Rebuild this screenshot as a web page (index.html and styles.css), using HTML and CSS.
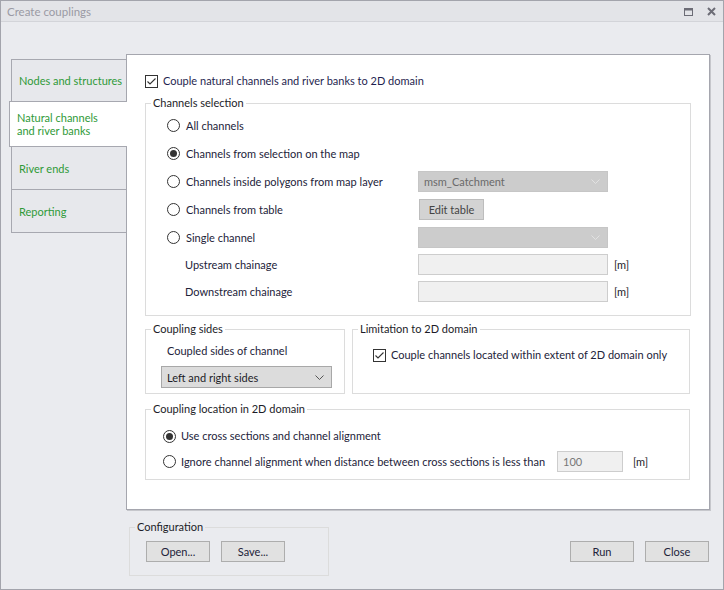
FILE: index.html
```html
<!DOCTYPE html>
<html lang="en">
<head>
  <meta charset="UTF-8">
  <title>Create couplings</title>
  <link rel="stylesheet" href="styles.css">
</head>
<body>
  <div class="window">
    <div class="titlebar">
      <span class="title">Create couplings</span>
      <span class="win-buttons">
        <svg width="9" height="8" viewBox="0 0 9 8"><rect x="0.5" y="0.5" width="8" height="7" fill="none" stroke="#6c6c76" stroke-width="1"/><rect x="0" y="0" width="9" height="2.5" fill="#6c6c76"/></svg>
        <svg width="9" height="9" viewBox="0 0 9 9"><path d="M1 1 L8 8 M8 1 L1 8" stroke="#6c6c76" stroke-width="2"/></svg>
      </span>
    </div>

    <div class="main">
      <div class="tabs">
        <div class="tab">Nodes and structures</div>
        <div class="tab active">Natural channels<br>and river banks</div>
        <div class="tab">River ends</div>
        <div class="tab">Reporting</div>
      </div>

      <div class="panel">
        <label class="check-row top-check">
          <span class="checkbox checked"></span>
          <span>Couple natural channels and river banks to 2D domain</span>
        </label>

        <fieldset class="group channels">
          <legend>Channels selection</legend>
          <div class="sel-grid">
            <div class="opt"><span class="radio"></span>All channels</div>
            <div></div>

            <div class="opt"><span class="radio on"></span>Channels from selection on the map</div>
            <div></div>

            <div class="opt"><span class="radio"></span>Channels inside polygons from map layer</div>
            <div class="combo disabled">msm_Catchment<span class="chev"></span></div>

            <div class="opt"><span class="radio"></span>Channels from table</div>
            <div><span class="btn small disabled">Edit table</span></div>

            <div class="opt"><span class="radio"></span>Single channel</div>
            <div class="combo disabled"><span class="chev"></span></div>

            <div class="sub">Upstream chainage</div>
            <div class="field-wrap"><span class="field"></span><span class="unit">[m]</span></div>

            <div class="sub">Downstream chainage</div>
            <div class="field-wrap"><span class="field"></span><span class="unit">[m]</span></div>
          </div>
        </fieldset>

        <div class="group-row">
          <fieldset class="group sides">
            <legend>Coupling sides</legend>
            <div class="sides-body">
              <div class="sides-label">Coupled sides of channel</div>
              <div class="combo active-combo">Left and right sides<span class="chev dark"></span></div>
            </div>
          </fieldset>
          <fieldset class="group limit">
            <legend>Limitation to 2D domain</legend>
            <label class="check-row limit-body">
              <span class="checkbox checked"></span>
              <span>Couple channels located within extent of 2D domain only</span>
            </label>
          </fieldset>
        </div>

        <fieldset class="group location">
          <legend>Coupling location in 2D domain</legend>
          <div class="loc-body">
            <div class="loc-row first"><span class="radio on"></span>Use cross sections and channel alignment</div>
            <div class="loc-row second">
              <span class="loc-label"><span class="radio"></span>Ignore channel alignment when distance between cross sections is less than</span>
              <span class="field short">100</span>
              <span class="unit wide">[m]</span>
            </div>
          </div>
        </fieldset>
      </div>
    </div>

    <div class="footer">
      <fieldset class="group config">
        <legend>Configuration</legend>
        <div class="btn-row config-body">
          <span class="btn">Open...</span>
          <span class="btn">Save...</span>
        </div>
      </fieldset>
      <div class="btn-row actions">
        <span class="btn">Run</span>
        <span class="btn">Close</span>
      </div>
    </div>
  </div>
</body>
</html>
```

FILE: styles.css
```css
body {
  margin: 0;
  font-family: "Lato", "Open Sans", sans-serif;
  font-size: 11px;
  color: #23233a;
}

.window {
  width: 724px;
  height: 590px;
  box-sizing: border-box;
  border: 1px solid #a3a4ac;
  background-color: #eaebef;
}

.titlebar {
  height: 20px;
  border-bottom: 1px solid #d3d4d9;
  background-color: #e3e4e8;
  display: flex;
  align-items: center;
  padding: 0 7px 0 6px;
}

.title {
  color: #9a9aa4;
  flex: 1;
  font-size: 11.5px;
}

.win-buttons {
  display: flex;
  align-items: center;
  gap: 14px;
  padding-top: 1px;
}

.main {
  display: flex;
  padding: 32px 0 0 10px;
}

.tabs {
  width: 115px;
  padding-top: 5px;
  display: flex;
  flex-direction: column;
}

.tab {
  box-sizing: border-box;
  height: 44px;
  margin-top: -1px;
  border: 1px solid #a7a8b0;
  border-right: none;
  background-color: #e7e8ec;
  color: #2f9a38;
  display: flex;
  align-items: center;
  padding-left: 7px;
  line-height: 13px;
  white-space: nowrap;
}

.tab:first-child {
  margin-top: 0;
  height: 43px;
}

.tab.active {
  position: relative;
  z-index: 1;
  height: 46px;
  margin-left: -2px;
  margin-right: -1px;
  background-color: #fff;
}

.panel {
  box-sizing: border-box;
  width: 584px;
  height: 456px;
  background-color: #fff;
  border: 1px solid #a5a6ae;
  box-shadow: 1px 1px 0 #c6c7cc;
  padding: 18px 18px 0 18px;
}

.check-row {
  display: flex;
  align-items: center;
  gap: 5px;
  line-height: 16px;
}

.top-check {
  color: #1f1f50;
}

.checkbox {
  box-sizing: border-box;
  width: 13px;
  height: 13px;
  border: 1px solid #333;
  background-color: #fff;
  flex: none;
}

.checkbox.checked {
  background: #fff url("data:image/svg+xml,%3Csvg xmlns='http://www.w3.org/2000/svg' width='11' height='11'%3E%3Cpath d='M1.5 5.5 L4 8 L9.5 2.5' fill='none' stroke='%23333' stroke-width='1.1'/%3E%3C/svg%3E") no-repeat center;
}

.radio {
  box-sizing: border-box;
  width: 13px;
  height: 13px;
  border: 1px solid #333;
  border-radius: 50%;
  background-color: #fff;
  flex: none;
  display: inline-flex;
  align-items: center;
  justify-content: center;
}

.radio.on::after {
  content: "";
  width: 7px;
  height: 7px;
  border-radius: 50%;
  background-color: #333;
}

.group {
  margin: 0;
  padding: 0;
  border: 1px solid #dcdcdc;
  min-width: 0;
  box-sizing: border-box;
}

.group legend {
  margin-left: 5px;
  padding: 0 2px;
  line-height: 16px;
  color: #1c1c28;
}

.channels {
  margin-top: 6px;
  width: 546px;
  padding-bottom: 10px;
}

.sel-grid {
  display: grid;
  grid-template-columns: 251px auto;
  grid-template-rows: repeat(5, 28px) repeat(2, 27px);
  align-items: center;
  padding-left: 21px;
}

.opt {
  display: flex;
  align-items: center;
  gap: 6px;
}

.sub {
  padding-left: 18px;
}

.combo {
  box-sizing: border-box;
  width: 190px;
  height: 21px;
  display: flex;
  align-items: center;
  padding-left: 5px;
  border: 1px solid #c6c6c6;
}

.combo.disabled {
  background-color: #cccccc;
  color: #6a6a6a;
}

.chev {
  margin-left: auto;
  margin-right: 7px;
  width: 9px;
  height: 5px;
  background: url("data:image/svg+xml,%3Csvg xmlns='http://www.w3.org/2000/svg' width='9' height='5'%3E%3Cpath d='M0.5 0.5 L4.5 4.5 L8.5 0.5' fill='none' stroke='%23e2e2e2' stroke-width='1'/%3E%3C/svg%3E") no-repeat;
}

.chev.dark {
  background: url("data:image/svg+xml,%3Csvg xmlns='http://www.w3.org/2000/svg' width='9' height='5'%3E%3Cpath d='M0.5 0.5 L4.5 4.5 L8.5 0.5' fill='none' stroke='%23555' stroke-width='1'/%3E%3C/svg%3E") no-repeat;
}

.btn {
  box-sizing: border-box;
  width: 64px;
  height: 21px;
  display: inline-flex;
  align-items: center;
  justify-content: center;
  background-color: #e1e1e1;
  border: 1px solid #adadad;
  color: #23233a;
}

.btn.small {
  width: 65px;
  margin-left: 1px;
}

.btn.disabled {
  background-color: #d3d3d3;
  border-color: #bdbdbd;
  color: #444;
}

.field-wrap {
  display: flex;
  align-items: center;
  gap: 6px;
}

.field {
  box-sizing: border-box;
  width: 190px;
  height: 21px;
  background-color: #f0f0f0;
  border: 1px solid #cdcdcd;
  display: inline-flex;
  align-items: center;
  padding-left: 5px;
  color: #777;
}

.unit {
  color: #1c1c28;
}

.group-row {
  display: flex;
  gap: 7px;
  margin-top: 5px;
}

.sides {
  width: 200px;
}

.sides-body {
  padding: 6px 0 5px 15px;
}

.sides-label {
  line-height: 16px;
  padding-left: 6px;
}

.combo.active-combo {
  margin-top: 7px;
  width: 171px;
  height: 22px;
  background-color: #dcdcdc;
  border-color: #a8a8a8;
  color: #1c1c28;
}

.limit {
  width: 338px;
}

.limit-body {
  padding: 10px 0 0 20px;
}

.location {
  margin-top: 7px;
  width: 545px;
}

.loc-body {
  padding: 11px 0 7px 17px;
}

.loc-row {
  display: flex;
  align-items: center;
  gap: 5px;
  white-space: nowrap;
}

.loc-row.first {
  line-height: 16px;
}

.loc-row.second {
  margin-top: 7px;
  height: 21px;
  gap: 0;
}

.loc-label {
  width: 394px;
  display: flex;
  align-items: center;
  gap: 5px;
}

.field.short {
  width: 66px;
}

.unit.wide {
  margin-left: 10px;
}

.footer {
  display: flex;
  align-items: flex-start;
  padding: 9px 14px 0 128px;
}

.config {
  width: 200px;
}

.config-body {
  padding: 6px 0 13px 16px;
}

.btn-row {
  display: flex;
  gap: 11px;
}

.actions {
  margin-left: auto;
  margin-top: 22px;
}
```
